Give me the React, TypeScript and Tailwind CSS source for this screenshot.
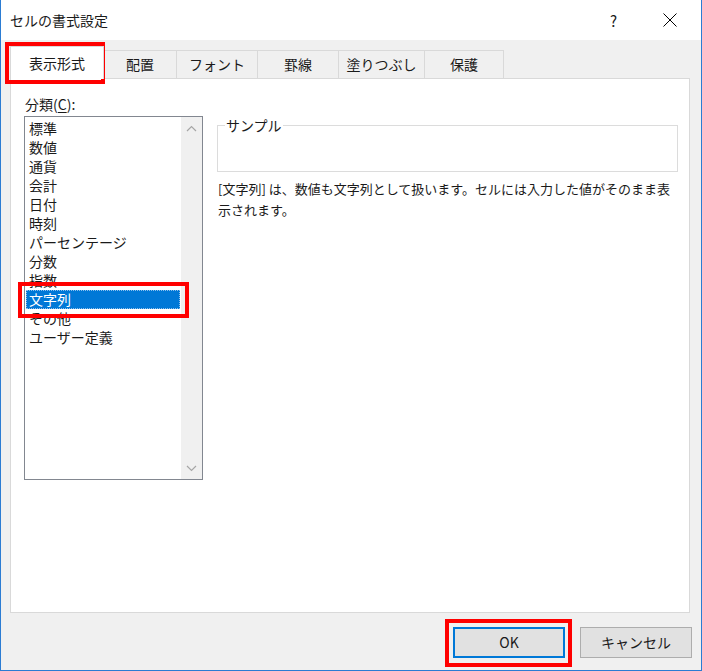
import React from "react";

const CATEGORIES = [
  "標準",
  "数値",
  "通貨",
  "会計",
  "日付",
  "時刻",
  "パーセンテージ",
  "分数",
  "指数",
  "文字列",
  "その他",
  "ユーザー定義",
];

const TABS = [
  { label: "配置", w: "w-[73px]" },
  { label: "フォント", w: "w-[81px]" },
  { label: "罫線", w: "w-[81px]" },
  { label: "塗りつぶし", w: "w-[86px]" },
  { label: "保護", w: "w-[79px]" },
];

function Chevron({ up }: { up?: boolean }) {
  return (
    <svg width="11" height="7" viewBox="0 0 11 7" fill="none">
      <polyline
        points={up ? "1,6 5.5,1.5 10,6" : "1,1 5.5,5.5 10,1"}
        stroke="#a6a6a6"
        strokeWidth="1.2"
      />
    </svg>
  );
}

export default function App() {
  const selected = "文字列";

  return (
    <div className="relative flex h-[671px] w-[702px] flex-col border-x border-b border-[#2b7cd3] bg-[#f0f0f0] font-['Noto_Sans_CJK_JP','Noto_Sans',sans-serif] text-[14px] text-[#1a1a1a]">
      {/* title bar */}
      <div className="flex h-[40px] items-center bg-white pl-[9px]">
        <span className="text-[14px] leading-none">セルの書式設定</span>
        <span className="ml-auto mr-[46px] text-[15px] leading-none">?</span>
        <svg width="14" height="14" viewBox="0 0 14 14" className="mr-[24px]">
          <line x1="0.5" y1="0.5" x2="13.5" y2="13.5" stroke="#000" strokeWidth="1" />
          <line x1="13.5" y1="0.5" x2="0.5" y2="13.5" stroke="#000" strokeWidth="1" />
        </svg>
      </div>

      {/* tabs */}
      <div className="mt-[6px] flex h-[32px] items-end pl-[9px]">
        <div className="relative z-10 -mb-px flex h-[33px] w-[94px] items-center justify-center border border-b-0 border-[#d9d9d9] bg-white">
          表示形式
        </div>
        {TABS.map((t) => (
          <div
            key={t.label}
            className={`flex h-[28px] ${t.w} items-center justify-center border-t border-r border-[#d9d9d9] bg-[#f0f0f0]`}
          >
            {t.label}
          </div>
        ))}
      </div>

      {/* panel */}
      <div className="ml-[9px] flex h-[535px] w-[680px] border border-[#d9d9d9] bg-white">
        <div className="flex flex-col pl-[13px] pt-[15px]">
          <div className="h-[20px] pl-px leading-[20px]">
            分類(<span className="underline underline-offset-2">C</span>):
          </div>
          <div className="mt-[2px] flex h-[364px] w-[179px] border border-[#828790] bg-white">
            <div className="flex w-[156px] flex-col pt-[2px]">
              {CATEGORIES.map((c) =>
                c === selected ? (
                  <div
                    key={c}
                    className="mx-px h-[19px] border border-dotted border-[#8cc0ee] bg-[#0078d7] pl-[2px] leading-[17px] text-white"
                  >
                    {c}
                  </div>
                ) : (
                  <div key={c} className="h-[19px] pl-[4px] leading-[19px]">
                    {c}
                  </div>
                )
              )}
            </div>
            <div className="flex w-[21px] flex-col items-center justify-between bg-[#f0f0f0] pb-[7px] pt-[8px]">
              <Chevron up />
              <Chevron />
            </div>
          </div>
        </div>

        <div className="ml-[14px] flex flex-col pt-[46px]">
          <div className="relative h-[47px] w-[461px] border border-[#dcdcdc]">
            <span className="absolute -top-[10px] left-[7px] bg-white px-[1px] text-[14px] leading-[18px]">
              サンプル
            </span>
          </div>
          <p className="mt-[6px] whitespace-nowrap pl-px text-[13px] leading-[21px]">
            [文字列] は、数値も文字列として扱います。セルには入力した値がそのまま表
            <br />
            示されます。
          </p>
        </div>
      </div>

      {/* buttons */}
      <div className="mt-[14px] flex justify-end gap-[15px] pr-[9px]">
        <button
          type="button"
          className="h-[31px] w-[112px] border-2 border-[#0078d7] bg-[#e1e1e1] text-[14px]"
        >
          OK
        </button>
        <button
          type="button"
          className="h-[31px] w-[112px] border border-[#adadad] bg-[#e1e1e1] text-[14px]"
        >
          キャンセル
        </button>
      </div>

      {/* red annotation frames */}
      <div className="pointer-events-none absolute left-[4px] top-[42px] h-[42px] w-[100px] border-4 border-[#ff0000]" />
      <div className="pointer-events-none absolute left-[17px] top-[282px] h-[36px] w-[171px] border-4 border-[#ff0000]" />
      <div className="pointer-events-none absolute left-[444px] top-[619px] h-[48px] w-[127px] border-4 border-[#ff0000]" />
    </div>
  );
}
